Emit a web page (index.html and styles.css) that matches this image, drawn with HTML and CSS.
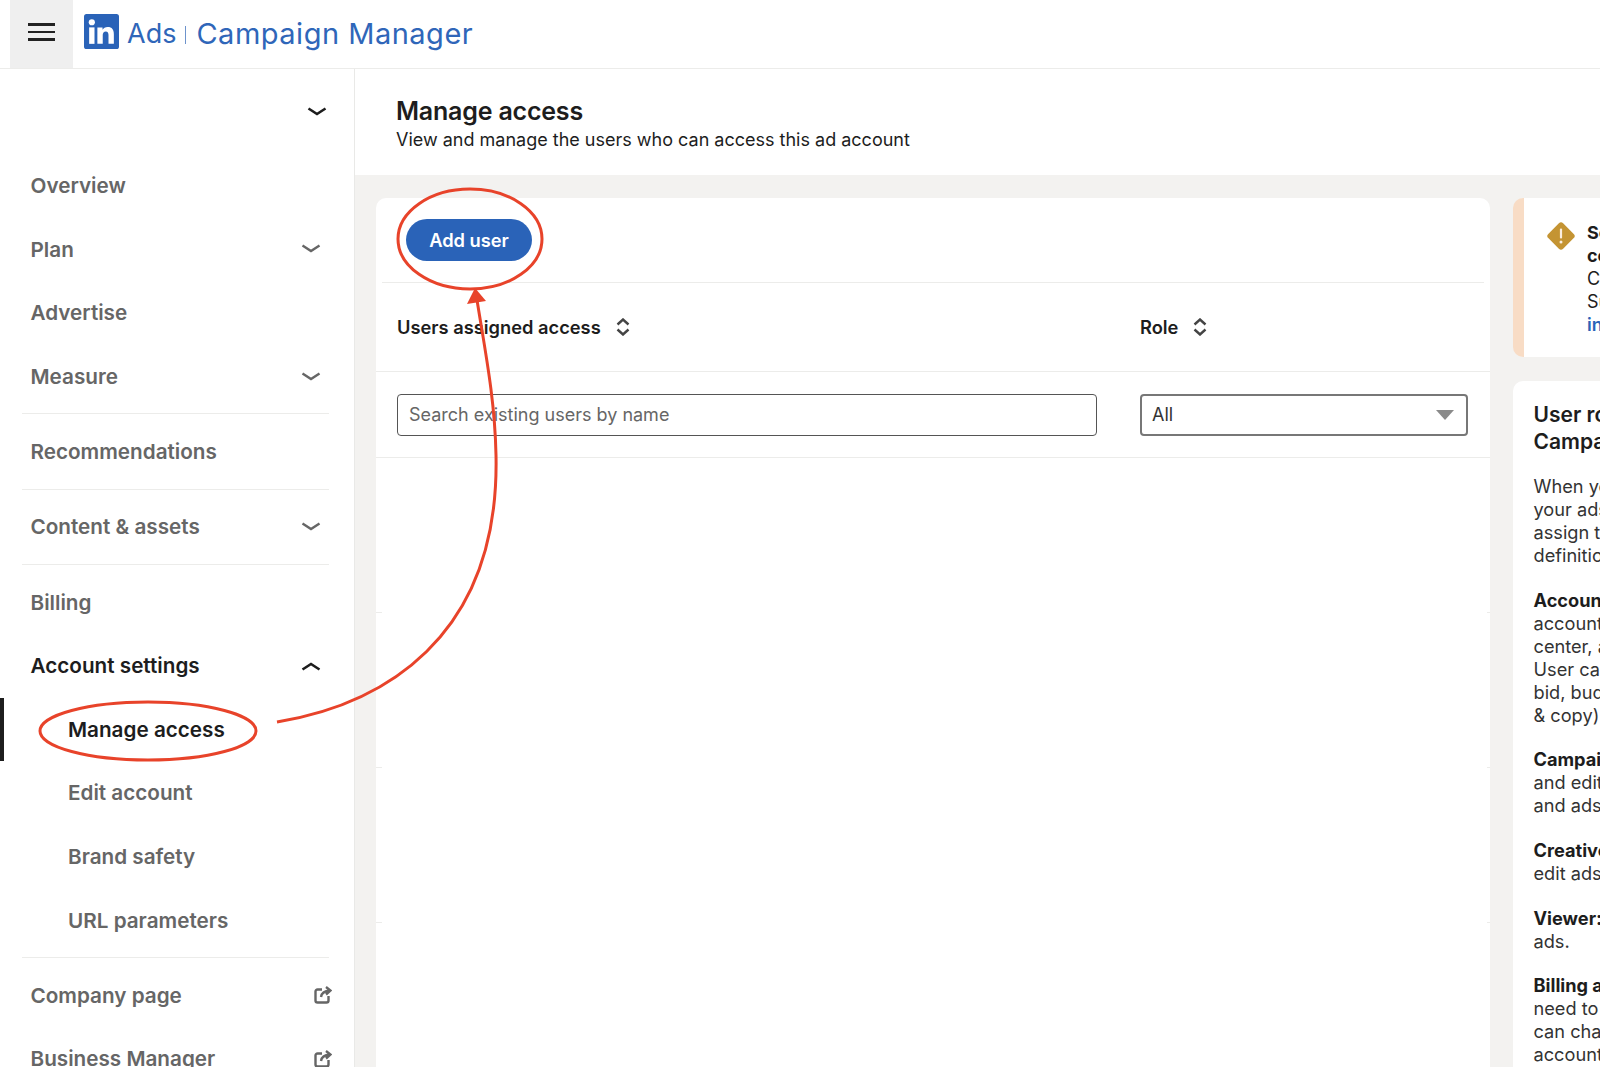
FILE: index.html
```html
<!DOCTYPE html>
<html lang="en">
<head>
    <meta charset="UTF-8">
    <meta name="viewport" content="width=device-width, initial-scale=1.0">
    <title>Manage access - Campaign Manager</title>
    <link rel="stylesheet" href="styles.css">
</head>
<body>
    <div class="page">
        <header class="topbar">
            <button class="burger" type="button" aria-label="Menu">
                <span></span><span></span><span></span>
            </button>
            <svg class="logo" viewBox="0 0 34 34" aria-label="LinkedIn">
                <rect width="34" height="34" rx="2.5" fill="#2a63b8"/>
                <circle cx="7.6" cy="8" r="3" fill="#fff"/>
                <rect x="5" y="13" width="5.2" height="16" fill="#fff"/>
                <path d="M13 13h5v2.3c.9-1.6 2.7-2.7 5-2.7 4.300 0 6 2.600 6 7v9.400h-5.200v-8.500c0-2.300-.7-3.600-2.600-3.600-2 0-3 1.400-3 3.600v8.500H13z" fill="#fff"/>
            </svg>
            <div class="product">Ads<span class="product-sep"></span><span class="product-name">Campaign Manager</span></div>
        </header>

        <div class="shell">
            <nav class="sidebar">
                <div class="account-picker">
                    <svg class="chev chev-dark" viewBox="0 0 20 10"><path d="M1.500 1.500 10 7l8.500-5.500"/></svg>
                </div>
                <a class="nav-row">Overview</a>
                <a class="nav-row">Plan <svg class="chev" viewBox="0 0 20 10"><path d="M1.500 1.500 10 7l8.500-5.500"/></svg></a>
                <a class="nav-row">Advertise</a>
                <a class="nav-row">Measure <svg class="chev" viewBox="0 0 20 10"><path d="M1.500 1.500 10 7l8.500-5.500"/></svg></a>
                <div class="nav-divider"></div>
                <a class="nav-row">Recommendations</a>
                <div class="nav-divider"></div>
                <a class="nav-row">Content &amp; assets <svg class="chev" viewBox="0 0 20 10"><path d="M1.500 1.500 10 7l8.500-5.500"/></svg></a>
                <div class="nav-divider"></div>
                <a class="nav-row">Billing</a>
                <a class="nav-row nav-open">Account settings <svg class="chev chev-dark" viewBox="0 0 20 10"><path d="M1.500 8.500 10 3l8.500 5.500"/></svg></a>
                <a class="nav-row nav-sub nav-active">Manage access</a>
                <a class="nav-row nav-sub">Edit account</a>
                <a class="nav-row nav-sub">Brand safety</a>
                <a class="nav-row nav-sub">URL parameters</a>
                <div class="nav-divider"></div>
                <a class="nav-row">Company page <svg class="ext" viewBox="0 0 18 18"><path d="M8 3.500H3.500a2 2 0 0 0-2 2v9a2 2 0 0 0 2 2h9a2 2 0 0 0 2-2V10"/><path d="M7 11c.5-4 3-6 9-6.500M12 1l4.500 3.500L12 8.500"/></svg></a>
                <a class="nav-row">Business Manager <svg class="ext" viewBox="0 0 18 18"><path d="M8 3.500H3.500a2 2 0 0 0-2 2v9a2 2 0 0 0 2 2h9a2 2 0 0 0 2-2V10"/><path d="M7 11c.5-4 3-6 9-6.500M12 1l4.500 3.500L12 8.500"/></svg></a>
            </nav>

            <main class="main">
                <div class="page-head">
                    <h1>Manage access</h1>
                    <p>View and manage the users who can access this ad account</p>
                </div>
                <div class="content">
                    <section class="card table-card">
                        <div class="table-actions">
                            <button class="btn-primary" type="button">Add user</button>
                        </div>
                        <div class="table-row table-head">
                            <div class="col-user">Users assigned access
                                <svg class="sort" viewBox="0 0 14 18"><path d="M1.500 6.500 7 1.500l5.500 5M1.500 11.500l5.500 5 5.500-5"/></svg>
                            </div>
                            <div class="col-role">Role
                                <svg class="sort" viewBox="0 0 14 18"><path d="M1.500 6.500 7 1.500l5.500 5M1.500 11.500l5.500 5 5.500-5"/></svg>
                            </div>
                        </div>
                        <div class="table-row table-filter">
                            <div class="col-user"><input class="field" type="text" placeholder="Search existing users by name"></div>
                            <div class="col-role">
                                <div class="field select">All <span class="caret"></span></div>
                            </div>
                        </div>
                        <div class="ghost-row"></div>
                        <div class="ghost-row"></div>
                        <div class="ghost-row"></div>
                    </section>

                    <aside class="side-col">
                        <div class="card alert">
                            <svg class="alert-icon" viewBox="0 0 30 30">
                                <rect x="4.500" y="4.500" width="21" height="21" rx="3" transform="rotate(45 15 15)" fill="#c49433"/>
                                <rect x="13.900" y="7.500" width="2.200" height="10" rx="1" fill="#fbeee0"/>
                                <circle cx="15" cy="21" r="1.500" fill="#fbeee0"/>
                            </svg>
                            <div class="alert-text">
                                <strong>Some users<br>could</strong><br>
                                Contact your<br>
                                Super admin<br>
                                <a>information</a>
                            </div>
                        </div>
                        <div class="card roles">
                            <h2>User roles in<br>Campaign Manager</h2>
                            <p>When you add<br>your ads account<br>assign them<br>definitions</p>
                            <p><strong>Account manager</strong><br>account users<br>center, and<br>User can<br>bid, budget<br>&amp; copy)</p>
                            <p><strong>Campaign manager</strong><br>and edit campaigns<br>and ads</p>
                            <p><strong>Creative manager</strong><br>edit ads</p>
                            <p><strong>Viewer:</strong><br>ads.</p>
                            <p><strong>Billing admin</strong><br>need to<br>can change<br>account</p>
                        </div>
                    </aside>
                </div>
            </main>
        </div>

        <svg class="annotations" viewBox="0 0 1600 1067">
            <ellipse cx="470" cy="239" rx="72" ry="50"/>
            <ellipse cx="148" cy="731" rx="108" ry="29"/>
            <path d="M277 722C380 705 500 640 496 455 495 400 485 350 477 300"/>
            <polygon points="475,288 467,304 486,301"/>
        </svg>
    </div>
</body>
</html>
```

FILE: styles.css
```css
* {
    box-sizing: border-box;
}
body {
    margin: 0;
    font-family: 'Inter', 'Liberation Sans', sans-serif;
    color: #1d1d1d;
    background-color: #fff;
}
.page {
    position: relative;
    width: 1600px;
    height: 1067px;
    overflow: hidden;
}

/* top bar */
.topbar {
    display: flex;
    align-items: center;
    height: 69px;
    padding-left: 10px;
    border-bottom: 1px solid #ececea;
}
.burger {
    display: flex;
    flex-direction: column;
    justify-content: center;
    align-items: center;
    gap: 5px;
    width: 63px;
    height: 68px;
    padding: 0 0 4px;
    border: none;
    background-color: #efefef;
}
.burger span {
    width: 27px;
    height: 2.500px;
    background-color: #222;
}
.logo {
    width: 35px;
    height: 35px;
    margin: 0 0 5px 11px;
}
.product {
    display: flex;
    align-items: center;
    margin: 0 0 1px 8px;
    font-size: 27px;
    color: #2f66b9;
}
.product-sep {
    width: 1px;
    height: 18px;
    margin: 2px 10px 0 9px;
    background-color: #6d93cc;
}
.product-name {
    font-size: 29px;
    letter-spacing: 0.5px;
}

/* sidebar */
.shell {
    display: flex;
    height: 998px;
}
.sidebar {
    flex: 0 0 355px;
    border-right: 1px solid #e9e9e7;
}
.account-picker {
    display: flex;
    justify-content: flex-end;
    height: 85px;
    padding: 38px 27px 0 0;
}
.nav-row {
    display: flex;
    align-items: center;
    justify-content: space-between;
    height: 63.6px;
    padding: 0 33px 0 30.500px;
    font-size: 20.700px;
    font-weight: 600;
    color: #666;
}
.nav-open {
    color: #1d1d1d;
}
.nav-sub {
    padding-left: 64px;
    border-left: 4px solid transparent;
}
.nav-active {
    color: #1d1d1d;
    border-left-color: #1d1d1d;
}
.nav-divider {
    height: 1px;
    margin: 5px 25px 5.600px 22px;
    background-color: #ececea;
}
.chev {
    width: 20px;
    height: 10px;
    fill: none;
    stroke: #666;
    stroke-width: 2.400;
}
.chev-dark {
    stroke: #1d1d1d;
    stroke-width: 2.600;
}
.ext {
    width: 18px;
    height: 18px;
    margin-right: -11px;
    fill: none;
    stroke: #666;
    stroke-width: 2.400;
}

/* main area */
.main {
    flex: 1;
    min-width: 0;
    background-color: #f3f2f0;
}
.page-head {
    height: 106px;
    padding: 26px 41px 0;
    background-color: #fff;
}
.page-head h1 {
    margin: 0;
    font-size: 25px;
    line-height: 32px;
    font-weight: 600;
    letter-spacing: -0.2px;
}
.page-head p {
    margin: 0;
    font-size: 18px;
    line-height: 25px;
}
.content {
    display: flex;
    gap: 23px;
    padding: 23px 0 0 21px;
}
.card {
    background-color: #fff;
    border-radius: 10px;
}
.table-card {
    flex: 0 0 1114px;
    height: 900px;
}
.table-actions {
    display: flex;
    align-items: center;
    height: 85px;
    margin: 0 6px;
    padding-left: 24px;
    border-bottom: 1px solid #ececea;
}
.btn-primary {
    width: 126px;
    height: 42px;
    border: none;
    border-radius: 21px;
    background-color: #2a63b8;
    color: #fff;
    font-family: inherit;
    font-size: 18.300px;
    font-weight: 600;
}
.table-row {
    display: flex;
    gap: 43px;
    align-items: center;
    padding: 0 22px 0 21px;
    border-bottom: 1px solid #ececea;
}
.table-head {
    height: 89px;
    font-size: 18.300px;
    font-weight: 600;
}
.table-filter {
    height: 86px;
}
.col-user {
    display: flex;
    align-items: center;
    gap: 15px;
    width: 700px;
}
.col-role {
    display: flex;
    align-items: center;
    gap: 15px;
    flex: 1;
}
.sort {
    width: 14px;
    height: 18px;
    fill: none;
    stroke: #444;
    stroke-width: 2.400;
}
.field {
    width: 100%;
    height: 42px;
    padding: 0 11px;
    border: 1px solid #555;
    border-radius: 4px;
    background-color: #fff;
    font-family: inherit;
    font-size: 18px;
    color: #333;
}
.field::placeholder {
    color: #666;
    opacity: 1;
}
.select {
    display: flex;
    align-items: center;
    justify-content: space-between;
    padding: 0 10px;
    border: 2px solid #777;
}
.caret {
    width: 0;
    height: 0;
    margin-right: 2px;
    border-left: 9px solid transparent;
    border-right: 9px solid transparent;
    border-top: 10px solid #8a8a8a;
}
.ghost-row {
    position: relative;
    height: 155px;
}
.ghost-row::before, .ghost-row::after {
    content: "";
    position: absolute;
    bottom: 0;
    height: 1px;
    background-color: #ececea;
}
.ghost-row::before {
    left: 0;
    width: 6px;
}
.ghost-row::after {
    right: 0;
    width: 3px;
}

/* right column */
.side-col {
    display: flex;
    flex-direction: column;
    gap: 24px;
    flex: 0 0 400px;
}
.alert {
    display: flex;
    height: 159px;
    padding: 23px 0 0 22px;
    border-left: 11px solid #f8dcc5;
}
.alert-icon {
    flex: none;
    width: 30px;
    height: 30px;
}
.alert-text {
    margin-left: 11px;
    font-size: 18px;
    line-height: 23px;
    white-space: nowrap;
}
.alert-text a {
    color: #2a63b8;
    font-weight: 600;
}
.roles {
    height: 700px;
    padding: 21px 0 0 20.500px;
    white-space: nowrap;
}
.roles h2 {
    margin: 0 0 20px;
    font-size: 21px;
    line-height: 26.500px;
    font-weight: 600;
}
.roles p {
    margin: 0 0 21.700px;
    font-size: 18.200px;
    line-height: 23px;
    color: #333;
}
.roles strong {
    color: #1d1d1d;
}

/* red markup drawn over the screenshot */
.annotations {
    position: absolute;
    top: 0;
    left: 0;
    width: 1600px;
    height: 1067px;
    pointer-events: none;
}
.annotations ellipse, .annotations path {
    fill: none;
    stroke: #e8432a;
    stroke-width: 3;
}
.annotations polygon {
    fill: #e8432a;
}
```
